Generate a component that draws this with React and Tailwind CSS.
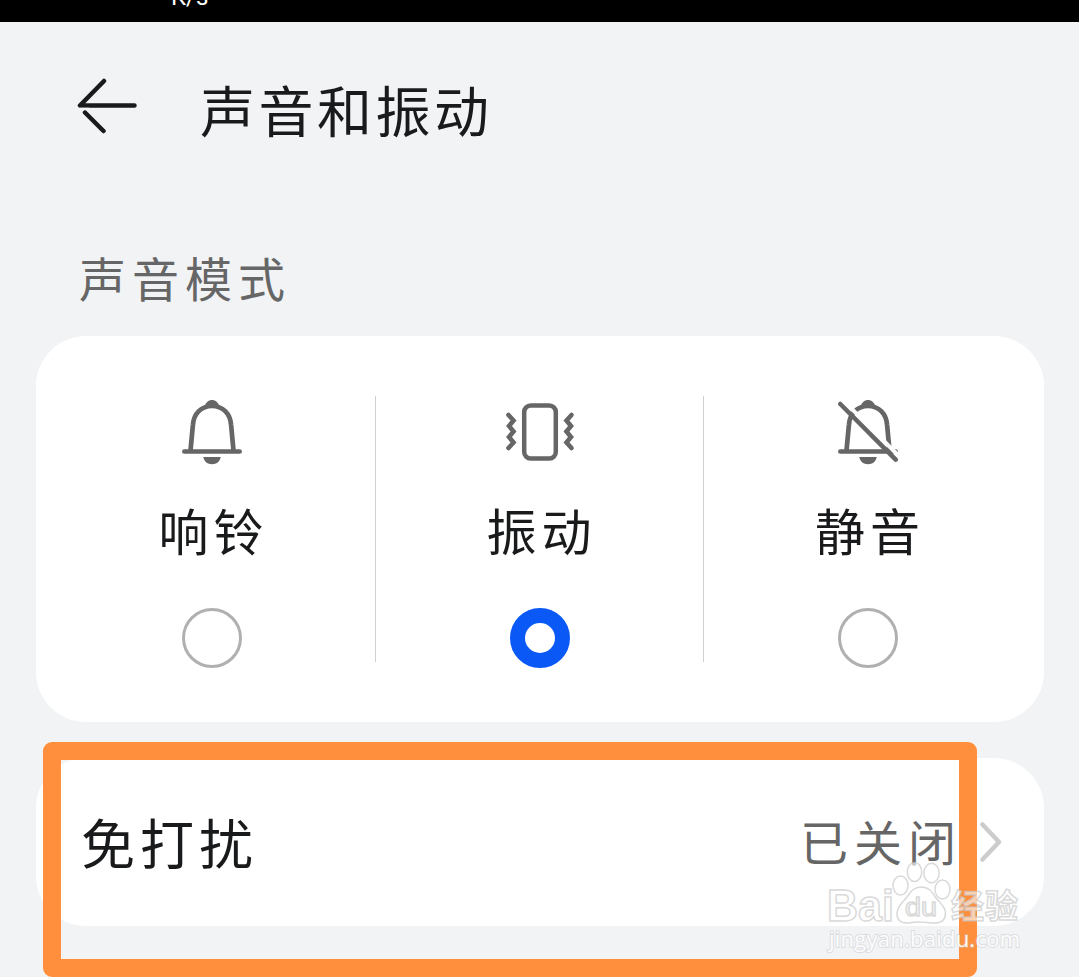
import clsx from 'clsx'

const FONT = "font-['Noto_Sans_CJK_SC',sans-serif]"

function BackArrow() {
  return (
    <svg width="60" height="56" viewBox="0 0 60 56" fill="none" stroke="#191a1b" strokeWidth="4.5">
      <path d="M27 3 3 27.500H57.500" strokeLinecap="round" strokeLinejoin="round" />
      <path d="M26.500 53 8 34.500" strokeLinecap="round" />
      <path d="M3 31H12" stroke="#f1f3f5" strokeWidth="2.500" />
    </svg>
  )
}

function Bell({ off }) {
  return (
    <svg width="60" height="66" viewBox="0 0 60 66" fill="none" stroke="#666" strokeWidth="4.7">
      <path d="M8.500 51.500 10.900 26C11.600 14.500 19.500 7 30 7S48.400 14.500 49.100 26L51.500 51.500" />
      <path d="M22.500 7.500C24 3 27 1 30 1S36 3 37.500 7.500Z" fill="#666" stroke="none" />
      <path d="M2.300 52.500H57.700" strokeWidth="4.500" strokeLinecap="round" />
      <path d="M21.200 58H38.800C37.500 62.800 34.500 65.200 30 65.200S22.500 62.800 21.200 58Z" fill="#666" stroke="none" />
      {off && (
        <>
          <path d="M5.800 1.800 61 57" stroke="#fff" strokeWidth="4" />
          <path d="M2.300 5 57.700 60.700" strokeWidth="4.500" strokeLinecap="round" />
        </>
      )}
    </svg>
  )
}

function Vibrate() {
  return (
    <svg width="70" height="66" viewBox="0 0 70 66" fill="none" stroke="#666" strokeWidth="4.5">
      <rect x="19.200" y="6.500" width="31.600" height="53" rx="6.500" />
      <g strokeWidth="4.600" strokeLinecap="round" strokeLinejoin="miter">
        <path d="M3.500 16 8.500 21.500 4 27 8.500 32.500 4 38 8.500 43.500 3.500 49" />
        <path d="M66.500 16 61.500 21.500 66 27 61.500 32.500 66 38 61.500 43.500 66.500 49" />
      </g>
    </svg>
  )
}

const MODES = [
  { label: '响铃', icon: <Bell /> },
  { label: '振动', icon: <Vibrate />, selected: true },
  { label: '静音', icon: <Bell off /> },
]

function ModeOption({ label, icon, selected }) {
  return (
    <div className="flex w-[328px] flex-col items-center border-r border-[#d0d0d0] last:border-r-0">
      <div className="mt-[3px]">{icon}</div>
      <span className="mt-[34px] h-[60px] pl-1 text-[50px] leading-[60px] tracking-[5px] text-[#191a1b]">{label}</span>
      <span
        className={clsx(
          'mt-[49px] size-[60px] shrink-0 rounded-full',
          selected ? 'border-[15px] border-[#0a59f7]' : 'border-3 border-[#b0b0b0]',
        )}
      />
    </div>
  )
}

function Watermark() {
  return (
    <svg
      className="absolute left-[820px] top-[855px]"
      width="210"
      height="105"
      viewBox="0 0 210 105"
      fill="#fff"
      fillOpacity="0.6"
      stroke="#c4c4c4"
      strokeOpacity="0.65"
      strokeWidth="1.5"
    >
      <ellipse cx="80.500" cy="30.500" rx="7.500" ry="9.500" />
      <ellipse cx="94.500" cy="17" rx="7.200" ry="9.500" />
      <ellipse cx="111.500" cy="18" rx="7.700" ry="9.700" />
      <ellipse cx="122.500" cy="34.500" rx="7.500" ry="9.500" />
      <path d="M101 32C94 32 91 36 87 42C82 48 77 52 77 59C77 65 81 68.500 88 68C94 67.500 97 66.500 101 67C106 67 109 68 115 68C121 68 125.500 65 125.500 58C125.500 52 120 48 116 43C112 37 109 32 101 32Z" />
      <text x="7" y="66" fontFamily="Liberation Sans" fontWeight="700" fontSize="44" textLength="67" lengthAdjust="spacingAndGlyphs">Bai</text>
      <text x="85" y="61" fontFamily="Liberation Sans" fontSize="26" textLength="32" lengthAdjust="spacingAndGlyphs">du</text>
      <text x="131" y="63" fontFamily="Noto Sans CJK SC" fontWeight="700" fontSize="33" textLength="67">经验</text>
      <text x="9" y="92" fontFamily="Open Sans" fontSize="22" strokeWidth="2" paintOrder="stroke" fillOpacity="0.95" strokeOpacity="0.45" textLength="191">jingyan.baidu.com</text>
    </svg>
  )
}

export default function App() {
  return (
    <div className={clsx('relative h-[977px] w-[1079px] overflow-hidden bg-[#f1f3f5]', FONT)}>
      <div className="flex h-[22px] items-end overflow-hidden bg-black pl-[171px]">
        <span className="mb-[13px] font-[Roboto,sans-serif] text-[24px] leading-[24px] text-white">K/s</span>
      </div>

      <header className="flex h-[168px] items-center pl-[77px]">
        <BackArrow />
        <h1 className="ml-[63px] mt-1 text-[55px] leading-[70px] tracking-[3.5px] text-[#191a1b]">声音和振动</h1>
      </header>

      <h2 className="mt-[54px] h-[92px] pl-[79px] text-[47px] leading-[66px] tracking-[6px] text-[#666]">声音模式</h2>

      <section className="mx-9 flex h-[386px] w-[1008px] rounded-[50px] bg-white px-3 py-[60px]">
        {MODES.map((mode) => (
          <ModeOption key={mode.label} {...mode} />
        ))}
      </section>

      <section className="mx-9 mt-9 flex h-[168px] w-[1008px] items-center rounded-[50px] bg-white pl-[45px] pr-[42px]">
        <span className="text-[54px] leading-[70px] tracking-[5px] text-[#191a1b]">免打扰</span>
        <span className="-mt-1 ml-auto text-[48px] leading-[70px] tracking-[6px] text-[#666]">已关闭</span>
        <svg className="ml-[18px]" width="22" height="40" viewBox="0 0 22 40" fill="none" stroke="#ccc" strokeWidth="4.5" strokeLinecap="round" strokeLinejoin="round">
          <path d="M2.500 2.500 19 20 2.500 37.500" />
        </svg>
      </section>

      <div className="absolute left-[43px] top-[742px] h-[235px] w-[934px] rounded-[9px] border-[18px] border-[#ff8f3c]" />
      <Watermark />
    </div>
  )
}
